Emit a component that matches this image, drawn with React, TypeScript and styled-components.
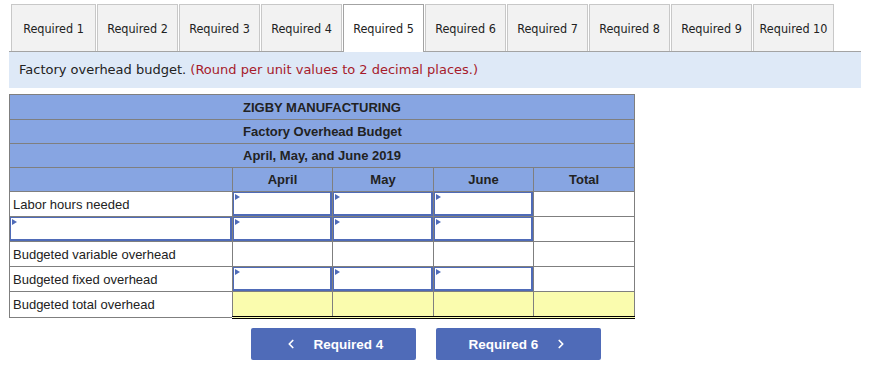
import React from "react";
import styled, { createGlobalStyle } from "styled-components";
import { ChevronLeft, ChevronRight } from "lucide-react";

const GlobalStyle = createGlobalStyle`
  html, body {
    margin: 0;
    padding: 0;
    background: #ffffff;
  }
  body {
    font-family: "Liberation Sans", Arial, sans-serif;
    color: #222222;
  }
`;

const Page = styled.div`
  padding: 4px 0 0 9px;
  width: 852px;
`;

const TabBar = styled.div`
  display: flex;
  align-items: flex-end;
  gap: 1px;
  padding-left: 2px;
  border-bottom: 1px solid #a3a3a3;
  height: 47px;
`;

const Tab = styled.div<{ $active?: boolean; $wide?: boolean }>`
  box-sizing: border-box;
  width: ${(p) => (p.$wide ? 85 : 81)}px;
  height: ${(p) => (p.$active ? 48 : 47)}px;
  margin-bottom: ${(p) => (p.$active ? -1 : 0)}px;
  border: 1px solid ${(p) => (p.$active ? "#a3a3a3" : "#c8c8c8")};
  border-bottom: none;
  background: ${(p) => (p.$active ? "#ffffff" : "#f2f2f2")};
  display: flex;
  align-items: center;
  justify-content: center;
  padding-bottom: ${(p) => (p.$active ? 1 : 0)}px;
  font-family: "DejaVu Sans Condensed", "DejaVu Sans", sans-serif;
  font-size: 12.5px;
  color: #222222;
  white-space: nowrap;
`;

const InfoBar = styled.div`
  height: 36px;
  background: #dee9f7;
  padding-left: 10px;
  font-family: "DejaVu Sans", Verdana, sans-serif;
  font-size: 13px;
  line-height: 36px;
  color: #222222;
`;

const Note = styled.span`
  color: #a61b2b;
`;

const Sheet = styled.table`
  margin-top: 6px;
  border-collapse: collapse;
  table-layout: fixed;
  width: 625px;
  font-family: "Liberation Sans", Arial, sans-serif;
  font-size: 13px;
`;

const HeadCell = styled.td<{ $indent?: boolean; $tall?: boolean }>`
  background: #87a5e2;
  border: 1px solid #7f7f7f;
  font-weight: bold;
  color: #222222;
  height: ${(p) => (p.$tall ? 24 : 23)}px;
  padding: ${(p) => (p.$indent ? "0 0 0 233px" : "0")};
  text-align: ${(p) => (p.$indent ? "left" : "center")};
  vertical-align: middle;
`;

const LabelCell = styled.td`
  border: 1px solid #7f7f7f;
  height: 24px;
  padding: 0 0 0 3px;
  color: #222222;
  white-space: nowrap;
`;

const DataCell = styled.td<{ $topRule?: boolean; $total?: boolean }>`
  border: 1px solid #7f7f7f;
  border-top: 1px solid ${(p) => (p.$topRule || p.$total ? "#000000" : "#7f7f7f")};
  border-bottom: ${(p) => (p.$total ? "3px double #000000" : "1px solid #7f7f7f")};
  background: ${(p) => (p.$total ? "#fafcae" : "#ffffff")};
  height: 24px;
  padding: 0;
`;

const EntryCell = styled.td`
  border: 1px solid #7f7f7f;
  height: 24px;
  padding: 0;
`;

const Entry = styled.div`
  position: relative;
  box-sizing: border-box;
  height: 24px;
  border: 2px solid #4f6bb8;
  border-left-width: 1px;
  border-top-width: 1px;
  background: #ffffff;

  &::before {
    content: "";
    position: absolute;
    left: 1px;
    top: 1px;
    width: 0;
    height: 0;
    border-top: 3px solid transparent;
    border-bottom: 3px solid transparent;
    border-left: 5px solid #4f6bb8;
  }
`;

const Nav = styled.div`
  display: flex;
  gap: 20px;
  padding-left: 242px;
  margin-top: 9px;
`;

const NavButton = styled.button`
  box-sizing: border-box;
  width: 165px;
  height: 32px;
  border: none;
  border-radius: 2px;
  background: #4f6bb8;
  color: #ffffff;
  font-family: "Liberation Sans", Arial, sans-serif;
  font-weight: bold;
  font-size: 13.5px;
  display: flex;
  align-items: center;
  justify-content: center;
  gap: 16px;
  padding: 0;
  cursor: pointer;
`;

const months = ["April", "May", "June"];

export default function App() {
  const tabs = Array.from({ length: 10 }, (_, i) => i + 1);
  return (
    <>
      <GlobalStyle />
      <Page>
        <TabBar>
          {tabs.map((n) => (
            <Tab key={n} $active={n === 5} $wide={n === 1}>
              Required {n}
            </Tab>
          ))}
        </TabBar>
        <InfoBar>
          Factory overhead budget. <Note>(Round per unit values to 2 decimal places.)</Note>
        </InfoBar>
        <Sheet>
          <colgroup>
            <col style={{ width: 223 }} />
            <col style={{ width: 100 }} />
            <col style={{ width: 101 }} />
            <col style={{ width: 100 }} />
            <col style={{ width: 101 }} />
          </colgroup>
          <tbody>
            <tr>
              <HeadCell colSpan={5} $indent $tall>
                ZIGBY MANUFACTURING
              </HeadCell>
            </tr>
            <tr>
              <HeadCell colSpan={5} $indent>
                Factory Overhead Budget
              </HeadCell>
            </tr>
            <tr>
              <HeadCell colSpan={5} $indent>
                April, May, and June 2019
              </HeadCell>
            </tr>
            <tr>
              <HeadCell />
              {months.map((m) => (
                <HeadCell key={m}>{m}</HeadCell>
              ))}
              <HeadCell>Total</HeadCell>
            </tr>
            <tr>
              <LabelCell>Labor hours needed</LabelCell>
              {months.map((m) => (
                <EntryCell key={m}>
                  <Entry />
                </EntryCell>
              ))}
              <DataCell />
            </tr>
            <tr>
              <EntryCell>
                <Entry />
              </EntryCell>
              {months.map((m) => (
                <EntryCell key={m}>
                  <Entry />
                </EntryCell>
              ))}
              <DataCell />
            </tr>
            <tr>
              <LabelCell>Budgeted variable overhead</LabelCell>
              {months.map((m) => (
                <DataCell key={m} $topRule />
              ))}
              <DataCell $topRule />
            </tr>
            <tr>
              <LabelCell>Budgeted fixed overhead</LabelCell>
              {months.map((m) => (
                <EntryCell key={m}>
                  <Entry />
                </EntryCell>
              ))}
              <DataCell />
            </tr>
            <tr>
              <LabelCell>Budgeted total overhead</LabelCell>
              {months.map((m) => (
                <DataCell key={m} $total />
              ))}
              <DataCell $total />
            </tr>
          </tbody>
        </Sheet>
        <Nav>
          <NavButton>
            <ChevronLeft size={14} strokeWidth={3} />
            Required 4
          </NavButton>
          <NavButton>
            Required 6
            <ChevronRight size={14} strokeWidth={3} />
          </NavButton>
        </Nav>
      </Page>
    </>
  );
}
